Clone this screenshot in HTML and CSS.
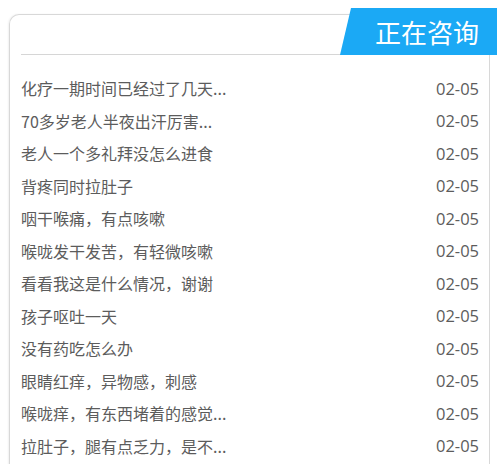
FILE: index.html
```html
<!DOCTYPE html>
<html lang="zh-CN">
<head>
<meta charset="utf-8">
<link rel="stylesheet" href="styles.css">
</head>
<body>
<div class="card">
  <div class="badge">正在咨询</div>
  <div class="head"></div>
  <ul class="list">
    <li><span class="q">化疗一期时间已经过了几天...</span><span class="d">02-05</span></li>
    <li><span class="q">70多岁老人半夜出汗厉害...</span><span class="d">02-05</span></li>
    <li><span class="q">老人一个多礼拜没怎么进食</span><span class="d">02-05</span></li>
    <li><span class="q">背疼同时拉肚子</span><span class="d">02-05</span></li>
    <li><span class="q">咽干喉痛，有点咳嗽</span><span class="d">02-05</span></li>
    <li><span class="q">喉咙发干发苦，有轻微咳嗽</span><span class="d">02-05</span></li>
    <li><span class="q">看看我这是什么情况，谢谢</span><span class="d">02-05</span></li>
    <li><span class="q">孩子呕吐一天</span><span class="d">02-05</span></li>
    <li><span class="q">没有药吃怎么办</span><span class="d">02-05</span></li>
    <li><span class="q">眼睛红痒，异物感，刺感</span><span class="d">02-05</span></li>
    <li><span class="q">喉咙痒，有东西堵着的感觉...</span><span class="d">02-05</span></li>
    <li><span class="q">拉肚子，腿有点乏力，是不...</span><span class="d">02-05</span></li>
  </ul>
</div>
</body>
</html>
```
FILE: styles.css
```css
html, body {
  margin: 0;
  padding: 0;
  background: #fff;
}
body {
  font-family: "Open Sans", "Noto Sans CJK SC", sans-serif;
  color: #5c5c5c;
}
.card {
  position: relative;
  margin: 14px 0 0 9px;
  width: 479px;
  height: 470px;
  border: 1px solid #d8d8d8;
  border-bottom: none;
  border-radius: 10px 0 0 0;
  box-shadow: -1px 0 2px rgba(0,0,0,0.06);
}
.head {
  margin: 0 0 0 11px;
  width: 320px;
  height: 39px;
  border-bottom: 1px solid #d6d6d6;
}
.badge {
  position: absolute;
  top: -7px;
  left: 330px;
  width: 157px;
  height: 47px;
  background: #1ba9f5;
  color: #fff;
  font-family: "Noto Sans CJK SC", sans-serif;
  font-size: 26px;
  line-height: 47px;
  text-align: right;
  padding-right: 18px;
  box-sizing: border-box;
  clip-path: polygon(11px 0, 100% 0, 100% 100%, 0 100%);
}
.list {
  list-style: none;
  margin: 0;
  padding: 17px 10px 0 11px;
}
.list li {
  display: flex;
  justify-content: space-between;
  align-items: center;
  height: 32.5px;
  font-size: 16px;
}
.q {
  font-family: "Noto Sans CJK SC", sans-serif;
  color: #5c5c5c;
}
.d {
  font-family: "Open Sans", sans-serif;
  font-size: 16.5px;
  color: #5c5c5c;
}
```
